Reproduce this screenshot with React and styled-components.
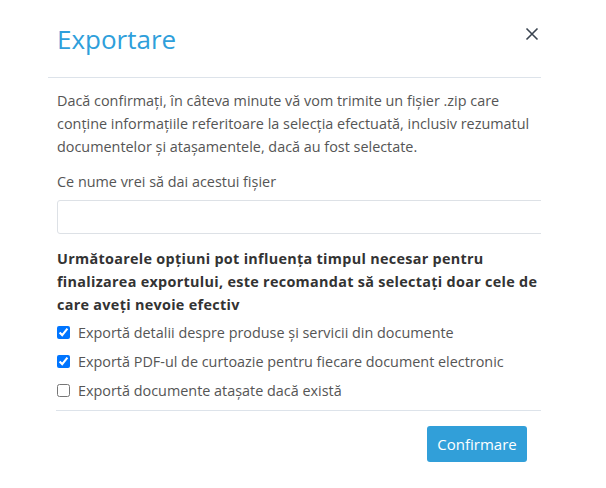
import React from 'react';
import styled, { createGlobalStyle } from 'styled-components';

const GlobalStyle = createGlobalStyle`
  body {
    margin: 0;
    background: #fff;
    font-family: "Open Sans", "Liberation Sans", sans-serif;
  }
`;

const Page = styled.div`
  width: 606px;
  height: 488px;
  padding-left: 48px;
  box-sizing: border-box;
`;

const Modal = styled.div`
  width: 493px;
  overflow: hidden;
`;

const Header = styled.div`
  display: flex;
  justify-content: space-between;
  align-items: flex-start;
  height: 78px;
  box-sizing: border-box;
  padding: 24px 2px 0 9px;
  border-bottom: 1px solid #dde3ea;
`;

const Title = styled.h2`
  margin: 0;
  font-size: 26px;
  line-height: 31px;
  font-weight: 400;
  color: #2f9fdb;
`;

const CloseButton = styled.button`
  border: 0;
  background: none;
  padding: 0;
  margin-top: 3px;
  width: 14px;
  height: 14px;
  display: flex;
  cursor: pointer;
`;

const Body = styled.div`
  padding: 11px 0 5px 9px;
  display: flex;
  flex-direction: column;
  color: #555;
  font-size: 14.4px;
  line-height: 23px;
`;

const Text = styled.p`
  margin: 0;
`;

const Label = styled.label`
  margin-top: 12px;
  display: block;
`;

const Input = styled.input`
  margin-top: 7px;
  width: 500px;
  height: 34px;
  box-sizing: border-box;
  border: 1px solid #dde1e6;
  border-radius: 3px;
  font: inherit;
  padding: 0 10px;
`;

const Notice = styled.p`
  margin: 13px 0 2px;
  font-weight: 700;
  letter-spacing: 0.3px;
  color: #333;
`;

const Option = styled.label`
  display: flex;
  align-items: center;
  gap: 8px;
  height: 29px;
  input {
    margin: 0;
    width: 13px;
    height: 13px;
  }
`;

const Footer = styled.div`
  margin-left: 8px;
  border-top: 1px solid #dde3ea;
  display: flex;
  justify-content: flex-end;
  padding: 15px 14px 0 0;
`;

const Confirm = styled.button`
  width: 100px;
  height: 36px;
  border: 0;
  border-radius: 3px;
  background: #319fd9;
  color: #fff;
  font-family: inherit;
  font-size: 15px;
  cursor: pointer;
`;

const options = [
  { label: 'Exportă detalii despre produse și servicii din documente', checked: true },
  { label: 'Exportă PDF-ul de curtoazie pentru fiecare document electronic', checked: true },
  { label: 'Exportă documente atașate dacă există', checked: false },
];

export default function App() {
  return (
    <Page>
      <GlobalStyle />
      <Modal>
        <Header>
          <Title>Exportare</Title>
          <CloseButton aria-label="Închide">
            <svg width="14" height="14" viewBox="0 0 14 14">
              <path d="M1.5 1.5 L12.5 12.5 M12.5 1.5 L1.5 12.5" stroke="#3a4450" strokeWidth="1.6" fill="none" />
            </svg>
          </CloseButton>
        </Header>
        <Body>
          <Text>
            Dacă confirmați, în câteva minute vă vom trimite un fișier .zip care conține informațiile
            referitoare la selecția efectuată, inclusiv rezumatul documentelor și atașamentele, dacă au
            fost selectate.
          </Text>
          <Label htmlFor="fname">Ce nume vrei să dai acestui fișier</Label>
          <Input id="fname" type="text" />
          <Notice>
            Următoarele opțiuni pot influența timpul necesar pentru finalizarea exportului, este
            recomandat să selectați doar cele de care aveți nevoie efectiv
          </Notice>
          {options.map((o) => (
            <Option key={o.label}>
              <input type="checkbox" defaultChecked={o.checked} />
              {o.label}
            </Option>
          ))}
        </Body>
        <Footer>
          <Confirm>Confirmare</Confirm>
        </Footer>
      </Modal>
    </Page>
  );
}
